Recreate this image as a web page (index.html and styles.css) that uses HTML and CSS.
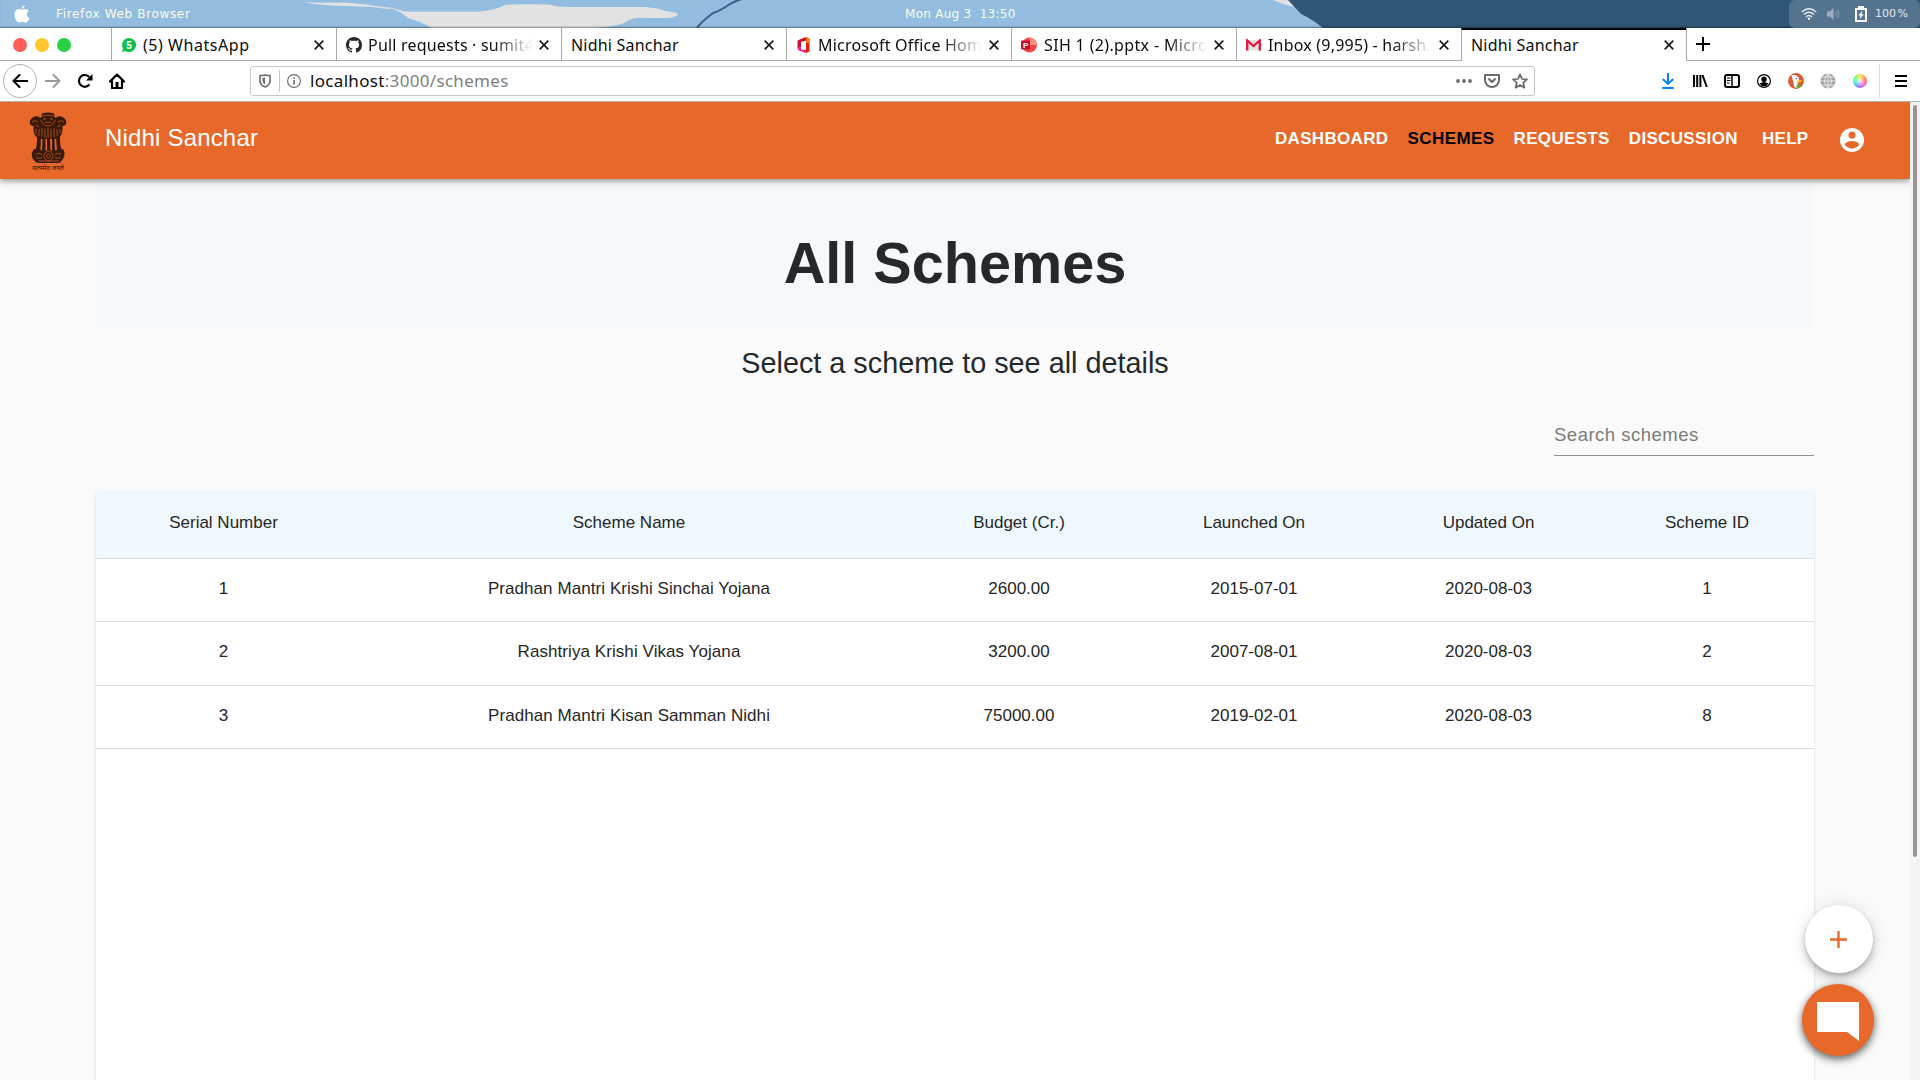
FILE: index.html
```html
<!DOCTYPE html>
<html lang="en">
<head>
<meta charset="utf-8">
<title>Nidhi Sanchar</title>
<link rel="stylesheet" href="styles.css">
</head>
<body>
<div class="sysbar">
  <svg class="wallpaper" viewBox="0 0 1920 28" width="1920" height="28">
    <rect width="1920" height="28" fill="#92bde0"/>
    <path d="M304 2.200Q320 3 345 2.500L366 4.500L382 7L396 8L388 9L372 7L345 6Q325 6 304 2.200Z" fill="#e2e2e2"/>
    <path d="M390 7.500L405 11.500H480Q495 10 505 5Q512 4 550 4.500Q556 7 568 7H645Q660 8 665 11Q678 12 678 15Q674 18 665 18H645Q632 17 624 23Q615 27 592 28H432L420 22L408 18L400 12Z" fill="#e2e2e2"/>
    <path d="M697 28Q700 23 713 13Q720 11 730 4Q735 1 742 -1" fill="none" stroke="#32618a" stroke-width="2"/>
    <path d="M1273 0H1289L1294 7Q1284 5 1273 0Z" fill="#e2e2e2"/>
    <path d="M1288 0L1301 14Q1312 19 1323 28H1920V0Z" fill="#315777"/>
  </svg>
  <svg class="apple" viewBox="0 0 16 18" width="16" height="18"><path d="M10.800.200C10.900 2 9.500 3.800 7.700 4C7.500 2.300 9 .5 10.800.200ZM8 4.900C8.800 4.900 9.600 4 11.300 4C12.900 4 14.200 4.900 14.900 6C12 7.600 12.400 11.800 15.500 13C14.700 15.300 13.100 17.800 11.600 17.800C10.400 17.800 10 17.100 8.400 17.100C6.800 17.100 6.300 17.800 5.300 17.800C3.200 17.800.5 13.500.5 9.800C.5 6.100 2.800 4.100 5 4.100C6.400 4.100 7.300 4.900 8 4.900Z" fill="#fff"/></svg>
  <span class="sys-app">Firefox Web Browser</span>
  <span class="sys-clock">Mon Aug 3&nbsp; 13:50</span>
  <div class="tray">
    <svg viewBox="0 0 16 14" width="16" height="14" fill="none" stroke="#e5eaef" stroke-width="1.300"><path d="M.8 5Q8-1.500 15.200 5M3 7.500Q8 3 13 7.500M5 10Q8 7 11 10"/><circle cx="8" cy="11.800" r="1.200" fill="#e5eaef" stroke="none"/></svg>
    <svg class="tray-vol" viewBox="0 0 14 14" width="14" height="14"><path d="M0 4.500H3L6.500 1V13L3 9.500H0Z" fill="#9dafc0"/><path d="M8.500 4.500Q10 7 8.500 9.500M10.500 2.500Q13.300 7 10.500 11.500" fill="none" stroke="#8299ad" stroke-width="1.200"/></svg>
    <svg class="tray-bat" viewBox="0 0 12 16" width="12" height="16"><path d="M3 0H9V2H12V16H0V2H3ZM2 4V14H10V4Z" fill="#fff" fill-rule="evenodd"/><path d="M7.500 4.500L3.200 9.500H5.500L4.500 13.200L8.900 8.300H6.500Z" fill="#fff"/></svg>
    <span class="sys-pct">100 %</span>
  </div>
</div>

<div class="tabbar">
  <div class="lights"><i class="red"></i><i class="amber"></i><i class="green"></i></div>
  <div class="tab">
    <svg viewBox="0 0 14 14" width="14" height="14"><path d="M7 0A7 7 0 1 1 3.500 13L0 14L1 10.500A7 7 0 0 1 7 0Z" fill="#0dc143"/><text x="7" y="10.600" class="fav-digit">5</text></svg>
    <span class="tab-title wide">(5) WhatsApp</span>
    <svg class="close" viewBox="0 0 10 10"><path d="M.7.7L9.300 9.300M9.300.7L.7 9.300"/></svg>
  </div>
  <div class="tab github">
    <svg viewBox="0 0 16 16" width="16" height="16"><path fill="#24292e" d="M8 0C3.580 0 0 3.580 0 8c0 3.540 2.290 6.530 5.470 7.590.4.070.55-.17.55-.38 0-.19-.01-.82-.01-1.490-2.010.37-2.530-.49-2.690-.94-.09-.23-.48-.94-.82-1.130-.28-.15-.68-.52-.01-.53.63-.01 1.080.58 1.230.82.72 1.210 1.870.87 2.330.66.070-.52.28-.87.51-1.070-1.780-.2-3.640-.89-3.640-3.950 0-.87.31-1.590.82-2.150-.08-.2-.36-1.020.08-2.120 0 0 .67-.21 2.200.82.64-.18 1.320-.27 2-.27s1.360.09 2 .27c1.530-1.040 2.200-.82 2.200-.82.44 1.100.16 1.920.08 2.120.51.56.82 1.270.82 2.150 0 3.070-1.870 3.750-3.650 3.950.29.25.54.73.54 1.480 0 1.070-.01 1.930-.01 2.200 0 .21.15.46.55.38A8.010 8.010 0 0 0 16 8c0-4.420-3.580-8-8-8z"/></svg>
    <span class="tab-title fade">Pull requests · sumit4</span>
    <svg class="close" viewBox="0 0 10 10"><path d="M.7.7L9.300 9.300M9.300.7L.7 9.300"/></svg>
  </div>
  <div class="tab">
    <span class="tab-title">Nidhi Sanchar</span>
    <svg class="close" viewBox="0 0 10 10"><path d="M.7.7L9.300 9.300M9.300.7L.7 9.300"/></svg>
  </div>
  <div class="tab office">
    <svg viewBox="0 0 14 16" width="14" height="16"><path d="M9 0L1.500 3Q.5 3.500.5 5V11.500L4 10V5L9 3.500Z" fill="#c8102e"/><path d="M.5 11.500L4 10V12.500L9 13V16L2 13.500Q.5 13 .5 11.500Z" fill="#f0209a"/><path d="M9 0L12.500 1.500V14.500L9 16Z" fill="#e0200c"/><path d="M9 0L12.500 1.500V6H9Z" fill="#ff7a18"/></svg>
    <span class="tab-title fade">Microsoft Office Hom</span>
    <svg class="close" viewBox="0 0 10 10"><path d="M.7.7L9.300 9.300M9.300.7L.7 9.300"/></svg>
  </div>
  <div class="tab">
    <svg viewBox="0 0 16 16" width="16" height="16"><circle cx="8.500" cy="8" r="7.500" fill="#ed4a45"/><path d="M8.500.500A7.500 7.500 0 0 1 16 8H8.500Z" fill="#ff8f7b"/><rect x="0" y="3.500" width="9" height="9" rx="1" fill="#c8102e"/><text x="4.600" y="10.800" class="fav-p">P</text></svg>
    <span class="tab-title fade pptx">SIH 1 (2).pptx - Micros</span>
    <svg class="close" viewBox="0 0 10 10"><path d="M.7.7L9.300 9.300M9.300.7L.7 9.300"/></svg>
  </div>
  <div class="tab">
    <svg viewBox="0 0 15 12" width="15" height="12"><rect x="1" y="1" width="13" height="10.500" fill="#e3e3e3"/><path d="M1.200 11.500V1.500L7.500 7L13.800 1.500V11.500" fill="none" stroke="#e2163c" stroke-width="2.300"/></svg>
    <span class="tab-title fade">Inbox (9,995) - harsh.k</span>
    <svg class="close" viewBox="0 0 10 10"><path d="M.7.7L9.300 9.300M9.300.7L.7 9.300"/></svg>
  </div>
  <div class="tab active">
    <span class="tab-title">Nidhi Sanchar</span>
    <svg class="close" viewBox="0 0 10 10"><path d="M.7.7L9.300 9.300M9.300.7L.7 9.300"/></svg>
  </div>
  <div class="newtab"><svg viewBox="0 0 14 14" width="14" height="14"><path d="M7 0V14M0 7H14" stroke="#000" stroke-width="2"/></svg></div>
</div>

<div class="toolbar">
  <div class="back"><svg viewBox="0 0 16 14" width="16" height="14"><path d="M15.500 7H1.500M7.500 1L1.500 7L7.500 13" fill="none" stroke="#000" stroke-width="2.100" stroke-linecap="round" stroke-linejoin="round"/></svg></div>
  <svg class="fwd" viewBox="0 0 16 14" width="16" height="14"><path d="M.5 7H14.500M8.500 1L14.500 7L8.500 13" fill="none" stroke="#9a9a9a" stroke-width="1.900" stroke-linecap="round" stroke-linejoin="round"/></svg>
  <svg class="reload" viewBox="0 0 16 16" width="16" height="16"><path d="M12.500 11.500A5.900 5.900 0 1 1 12.300 4" fill="none" stroke="#000" stroke-width="2.200"/><path d="M15.500 1V7.500H9Z"/></svg>
  <svg class="home" viewBox="0 0 16 16" width="16" height="16"><path d="M1 8.500L8 1.500L15 8.500M3 7.500V15H13V7.500" fill="none" stroke="#000" stroke-width="2.200" stroke-linecap="round" stroke-linejoin="round"/><path d="M6.500 9H9.500V15H6.500Z"/></svg>
  <div class="urlbar">
    <svg class="shield" viewBox="0 0 12 14" width="12" height="14"><path d="M1 1.500Q4 1.500 6 .900Q8 1.500 11 1.500V6.500Q11 11 6 13Q1 11 1 6.500Z" fill="none" stroke="#6a6a6a" stroke-width="1.600"/><path d="M6 3.500V10.500Q3.500 9 3.500 6.500V4Z" fill="#6a6a6a"/></svg>
    <i class="sep"></i>
    <svg class="info" viewBox="0 0 14 14" width="14" height="14"><circle cx="7" cy="7" r="6.400" fill="none" stroke="#6a6a6a" stroke-width="1.100"/><path d="M7 6V10.500M7 3.200V4.800" stroke="#6a6a6a" stroke-width="1.600"/></svg>
    <span class="url"><b>localhost</b>:3000/schemes</span>
    <svg class="dots" viewBox="0 0 16 4" width="16" height="4" fill="#6a6a6a"><circle cx="2" cy="2" r="1.900"/><circle cx="8" cy="2" r="1.900"/><circle cx="14" cy="2" r="1.900"/></svg>
    <svg class="pocket" viewBox="0 0 16 14" width="16" height="14" fill="none" stroke="#6a6a6a" stroke-width="2" stroke-linejoin="round" stroke-linecap="round"><path d="M1 1H15V6A7 7 0 0 1 1 6Z"/><path d="M5 5L8 8L11 5"/></svg>
    <svg viewBox="0 0 16 16" width="16" height="16"><path d="M8 1.300L10 6L15 6.400L11.200 9.700L12.400 14.700L8 12L3.600 14.700L4.800 9.700L1 6.400L6 6Z" fill="none" stroke="#6a6a6a" stroke-width="1.700" stroke-linejoin="round"/></svg>
  </div>
  <div class="actions">
    <svg viewBox="0 0 16 16" width="16" height="16"><path d="M6.300 0V10M1 6L6.300 11L11.600 6M.5 15H12.100" transform="translate(1.700 0)" fill="none" stroke="#0a84ff" stroke-width="2"/></svg>
    <svg viewBox="0 0 16 16" width="16" height="16" stroke="#000" stroke-width="2"><path d="M2 2V14M5.200 2V14M8.400 2V14M10.500 2L14.800 14" fill="none"/></svg>
    <svg viewBox="0 0 16 16" width="16" height="16" fill="none" stroke="#000"><rect x="1" y="2" width="14" height="12" rx="2" stroke-width="2"/><path d="M8 2V14" stroke-width="1.500"/><path d="M3 5H6.500M3 7.500H6.500M3 10H5.500" stroke-width="1"/></svg>
    <svg viewBox="0 0 16 16" width="16" height="16"><circle cx="8" cy="8" r="6.400" fill="none" stroke="#000" stroke-width="1.200"/><circle cx="8" cy="6.200" r="2.700"/><path d="M3.600 10.500Q8 7.500 12.400 10.500Q11 13.300 8 13.300Q5 13.300 3.600 10.500Z"/></svg>
    <svg viewBox="0 0 16 16" width="16" height="16"><circle cx="8" cy="8" r="7.900" fill="#de5833"/><path d="M3.500 2.500Q6 1 9 3Q11.500 4.500 11 7Q9.500 8.500 9.500 10Q9.500 12 10 14.500Q6.500 15.500 6 13Q5.500 9 4.500 6Z" fill="#fff"/><circle cx="8.300" cy="5.500" r=".7" fill="#2d4f8e"/><path d="M9 7.800L14 7Q13.500 9.500 9 9.700Z" fill="#fdd20a"/><path d="M8 12.500L12.500 11.500V14L9 15Z" fill="#4cba3c"/></svg>
    <svg viewBox="0 0 16 16" width="16" height="16"><circle cx="8" cy="8" r="7.600" fill="#a3a3a3"/><path d="M8 0V16M0 8H16M1.500 4H14.500M1.500 12H14.500M8 .5Q1 8 8 15.500M8 .5Q15 8 8 15.500" fill="none" stroke="#fff" stroke-width=".7"/></svg>
    <i class="wheel"></i>
  </div>
  <i class="menu-sep"></i>
  <svg class="burger" viewBox="0 0 12 12" width="12" height="12"><path d="M0 1H12M0 6H12M0 11H12" stroke="#000" stroke-width="2"/></svg>
</div>

<div class="viewport">
  <div class="page">
    <header class="appbar">
      <svg class="emblem" viewBox="0 0 40 60" width="40" height="60">
        <g fill="#3a1a0a">
          <path d="M14 2.500Q20 .5 26 2.500L27 7Q32 3.500 36.500 7.500Q39 10 38 13Q37 15 34.500 15Q35 21 32.500 25Q30 28 26 28H14Q10 28 7.500 25Q5 21 5.500 15Q3 15 2 13Q1 10 3.500 7.500Q8 3.500 13 7Z"/>
          <path d="M9 25H13L12.500 40H7Q9.500 34 9 25ZM14.500 27H17.500V40H14ZM19 27H22L22.500 40H19ZM24 27H26.500L27 40H24ZM28 25H32Q31.500 34 34 40H29Z"/>
          <path d="M6 38Q20 41.500 35 38Q38 43 35 48Q33 51 31 52H10Q7 51 5 48Q2 43 6 38Z"/>
        </g>
        <g fill="none" stroke="#e76829" stroke-width=".8" opacity=".75">
          <path d="M14 5Q20 3 26 5M15 8H18M22 8H25M17 11Q20 13 23 11M13 9Q15 15 20 15Q25 15 27 9M4 11Q7 8 10 11M30 11Q34 8 36 11M8 14Q9 16 11 15M29 15Q31 16 33 14M8 18V23M11 18V25M14 17V26M17 18V27M20 17V27M23 18V27M26 17V26M29 18V25M32 18V22"/>
          <circle cx="20.500" cy="45" r="4.600"/><circle cx="20.500" cy="45" r="2"/>
          <path d="M8 43Q11 41 14 44M8 47H14M27 44Q30 41 33 43M27 47H33M10 50H31"/>
        </g>
        <text x="20" y="58.500" class="motto">सत्यमेव जयते</text>
      </svg>
      <span class="brand">Nidhi Sanchar</span>
      <nav class="nav">
        <a>DASHBOARD</a><a class="current">SCHEMES</a><a>REQUESTS</a><a>DISCUSSION</a><a class="help">HELP</a>
      </nav>
      <svg class="account" viewBox="2 2 20 20" width="24" height="24"><path fill="#fff" d="M12 2C6.480 2 2 6.480 2 12s4.480 10 10 10 10-4.480 10-10S17.520 2 12 2zm0 3c1.660 0 3 1.340 3 3s-1.340 3-3 3-3-1.340-3-3 1.340-3 3-3zm0 14.200c-2.500 0-4.710-1.280-6-3.220.03-1.990 4-3.080 6-3.080 1.990 0 5.970 1.090 6 3.080-1.290 1.940-3.500 3.220-6 3.220z"/></svg>
    </header>
    <main class="content">
      <section class="jumbo"><h1>All Schemes</h1></section>
      <h2>Select a scheme to see all details</h2>
      <div class="search"><span>Search schemes</span></div>
      <section class="card">
        <table>
          <colgroup><col class="c1"><col class="c2"><col class="c3"><col class="c4"><col class="c5"><col class="c6"></colgroup>
          <thead><tr><th>Serial Number</th><th>Scheme Name</th><th>Budget (Cr.)</th><th>Launched On</th><th>Updated On</th><th>Scheme ID</th></tr></thead>
          <tbody>
            <tr><td>1</td><td>Pradhan Mantri Krishi Sinchai Yojana</td><td>2600.00</td><td>2015-07-01</td><td>2020-08-03</td><td>1</td></tr>
            <tr class="tall"><td>2</td><td>Rashtriya Krishi Vikas Yojana</td><td>3200.00</td><td>2007-08-01</td><td>2020-08-03</td><td>2</td></tr>
            <tr><td>3</td><td>Pradhan Mantri Kisan Samman Nidhi</td><td>75000.00</td><td>2019-02-01</td><td>2020-08-03</td><td>8</td></tr>
          </tbody>
        </table>
      </section>
    </main>
    <div class="fabs">
      <div class="fab-add"><svg viewBox="0 0 17 17" width="17" height="17"><path d="M8.500 0V17M0 8.500H17" stroke="#e76829" stroke-width="2.400"/></svg></div>
      <div class="fab-chat"><svg viewBox="0 0 42 39" width="42" height="39"><path d="M0 0H42V39L30 30H0Z" fill="#fff"/></svg></div>
    </div>
  </div>
  <div class="scroll"><i></i></div>
</div>
</body>
</html>
```
FILE: styles.css
```css
* { box-sizing: border-box; }
body {
  margin: 0;
  width: 1920px;
  height: 1080px;
  overflow: hidden;
  display: flex;
  flex-direction: column;
  background: #fff;
  font-family: "Liberation Sans", Arial, sans-serif;
}
svg { display: block; flex: none; }

/* system bar */
.sysbar {
  position: relative;
  flex: none;
  height: 28px;
  display: flex;
  align-items: center;
  padding-left: 14px;
  font: 12px/28px "DejaVu Sans", sans-serif;
  color: #fbfbe6;
  box-shadow: inset 0 -2px 2px -1px rgba(0, 0, 0, .4);
}
.wallpaper { position: absolute; inset: 0; z-index: -1; }
.sys-app { margin-left: 26px; width: 849px; letter-spacing: .65px; }
.sys-clock { letter-spacing: .28px; white-space: nowrap; }
.tray {
  margin-left: auto;
  width: 131px;
  height: 28px;
  display: flex;
  align-items: center;
  padding-left: 12px;
  border-radius: 6px;
  background: #54738e;
  color: #e5eaef;
}
.tray-vol { margin-left: 10px; }
.tray-bat { margin-left: 14px; }
.sys-pct { margin-left: 8px; font-size: 11px; word-spacing: -2px; white-space: nowrap; }

/* tabs */
.tabbar {
  flex: none;
  height: 33px;
  display: flex;
  background: linear-gradient(#b0b0b0, #b0b0b0) 0 100% / 100% 1px no-repeat #fff;
}
.lights { width: 111px; display: flex; gap: 8px; padding: 10px 0 0 13px; }
.lights i { width: 14px; height: 14px; border-radius: 50%; }
.red { background: #ff5f57; }
.amber { background: #ffc62e; }
.green { background: #28d141; }
.tab {
  width: 225px;
  display: flex;
  align-items: center;
  gap: 7px;
  padding: 0 12px 0 9px;
  border-left: 1px solid #a8a8a8;
}
.tab:nth-child(2) { padding-left: 10px; }
.github { gap: 6px; }
.office { padding-left: 10px; }
.tab-title {
  flex: 1;
  min-width: 0;
  overflow: hidden;
  white-space: nowrap;
  font: 16px/32px "Noto Sans", sans-serif;
  letter-spacing: .2px;
  color: #0c0c0d;
}
.wide { letter-spacing: .55px; }
.pptx { letter-spacing: .35px; }
.fade { -webkit-mask-image: linear-gradient(90deg, #000 calc(100% - 40px), transparent); mask-image: linear-gradient(90deg, #000 calc(100% - 40px), transparent); }
.close { width: 10px; height: 10px; fill: none; stroke: #1c1c1c; stroke-width: 1.700; }
.active { background: #fff; border-top: 2px solid #000; }
.active .tab-title { line-height: 30px; margin-top: -2px; }
.active .close { margin-top: -2px; }
.newtab { border-left: 1px solid #a8a8a8; padding: 9px 0 0 9px; }
.fav-digit { font: bold 10px "Liberation Sans", sans-serif; fill: #fff; text-anchor: middle; }
.fav-p { font: bold 8px "Liberation Sans", sans-serif; fill: #fff; text-anchor: middle; }

/* toolbar */
.toolbar {
  flex: none;
  height: 41px;
  display: flex;
  align-items: center;
  padding-left: 3px;
  border-bottom: 1px solid #b0b0b0;
}
.back {
  width: 34px;
  height: 34px;
  border: 1px solid #b0b0b0;
  border-radius: 50%;
  display: grid;
  place-items: center;
}
.fwd { margin-left: 8px; }
.reload { margin-left: 16px; }
.home { margin-left: 16px; }
.urlbar {
  width: 1285px;
  height: 30px;
  margin-left: 125px;
  border: 1px solid #c8c8c8;
  border-radius: 3px;
  display: flex;
  align-items: center;
  padding: 0 6px 0 8px;
}
.sep { width: 1px; height: 22px; background: #c8c8c8; margin: 0 7px 0 8px; }
.url { flex: 1; margin-left: 9px; font: 17px/28px "Noto Sans", sans-serif; letter-spacing: .32px; color: #808080; }
.url b { font-weight: 400; color: #0c0c0d; }
.pocket { margin: 0 12px 0 12px; }
.actions { display: flex; align-items: center; gap: 16px; margin-left: 125px; }
.wheel {
  width: 14px;
  height: 14px;
  margin-left: 1px;
  border-radius: 50%;
  background: radial-gradient(rgba(255, 255, 255, .8), rgba(255, 255, 255, 0) 60%), conic-gradient(#ffe14d, #ff9d4d, #ff6b6b, #ff66e0, #9c78ff, #55b4ff, #4dffc0, #80ff5c, #ffe14d);
}
.menu-sep { width: 1px; height: 34px; margin-left: 12px; background: #dcdcdc; }
.burger { margin-left: 15px; }

/* page */
.viewport { flex: 1; min-height: 0; display: flex; }
.page { position: relative; width: 1910px; overflow: hidden; background: #fafafa; }
.appbar {
  position: relative;
  height: 77px;
  display: flex;
  align-items: center;
  padding: 0 46px 0 28px;
  background: #e76829;
  box-shadow: 0 2px 4px -1px rgba(0, 0, 0, .2), 0 4px 5px rgba(0, 0, 0, .14), 0 1px 10px rgba(0, 0, 0, .12);
}
.motto { font: 6.500px "Noto Sans Devanagari", "Noto Sans", sans-serif; fill: #2b1507; text-anchor: middle; }
.brand { margin-left: 37px; padding-bottom: 5px; font-size: 24px; color: #fff; letter-spacing: .18px; }
.nav { display: flex; gap: 19.100px; margin-left: auto; padding-bottom: 4px; font-size: 17px; font-weight: 700; letter-spacing: .32px; color: #fff; }
.nav a:nth-child(2) { letter-spacing: .42px; }
.current { color: #000; }
.help { margin-left: 5px; }
.account { margin: -1px 0 0 31.500px; }
.content { width: 1718px; margin-left: 96px; display: flex; flex-direction: column; color: #24292e; }
.jumbo { height: 149px; padding-top: 51px; background: #f7f8fa; text-align: center; }
h1 { margin: 0; font-size: 57.600px; line-height: 66px; }
h2 { margin: 18px 0 0; font-size: 28.800px; line-height: 34px; font-weight: 400; text-align: center; }
.search {
  align-self: flex-end;
  width: 260px;
  height: 38px;
  margin-top: 38px;
  padding-top: 6px;
  border-bottom: 1px solid #8f8f8f;
  font-size: 18.500px;
  line-height: 22px;
  letter-spacing: .5px;
  color: #7b7b7b;
}
.card {
  height: 700px;
  margin-top: 35px;
  overflow: hidden;
  border-radius: 4px;
  background: #fff;
  box-shadow: 0 2px 1px -1px rgba(0, 0, 0, .2), 0 1px 1px rgba(0, 0, 0, .14), 0 1px 3px rgba(0, 0, 0, .12);
}
table { width: 1718px; table-layout: fixed; border-collapse: separate; border-spacing: 0; font-size: 17px; line-height: 20px; color: #262626; }
.c1 { width: 255px; } .c2 { width: 556px; } .c3 { width: 224px; } .c4 { width: 246px; } .c5 { width: 223px; } .c6 { width: 214px; }
th, td { padding: 0; text-align: center; vertical-align: top; font-weight: 400; border-bottom: 1px solid #dcdcdc; }
th { height: 68px; padding-top: 22px; background: #f0f8ff; }
td { height: 63px; padding-top: 20px; }
td:nth-child(2) { letter-spacing: .07px; }
.tall td { height: 64px; }

.fabs { position: absolute; right: 36px; top: 803px; display: flex; flex-direction: column; align-items: center; gap: 11px; }
.fab-add, .fab-chat { display: grid; place-items: center; border-radius: 50%; }
.fab-add { width: 68px; height: 68px; margin-left: 1px; background: #fff; box-shadow: 0 3px 5px -1px rgba(0, 0, 0, .2), 0 6px 10px rgba(0, 0, 0, .14), 0 1px 18px rgba(0, 0, 0, .12); }
.fab-chat { width: 72px; height: 72px; padding-top: 3px; background: #e76829; box-shadow: 0 3px 8px rgba(0, 0, 0, .65); }

.scroll { width: 10px; padding: 3px 3px 0; background: #f3f3f3; }
.scroll i { display: block; width: 4px; height: 752px; border-radius: 2px; background: #979797; }
```
